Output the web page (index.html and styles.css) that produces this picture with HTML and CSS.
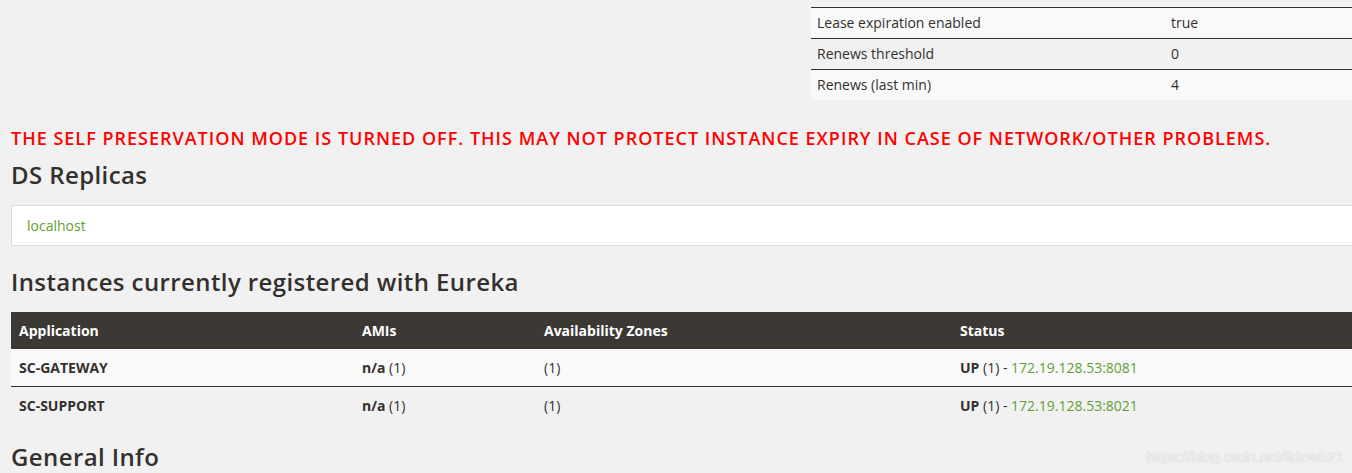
FILE: index.html
```html
<!DOCTYPE html>
<html lang="en">
<head>
    <meta charset="UTF-8">
    <title>Eureka</title>
    <link rel="stylesheet" href="styles.css">
</head>
<body>
    <div class="container">
        <div class="top-row">
            <table class="stats">
                <tr><td>Lease expiration enabled</td><td>true</td></tr>
                <tr><td>Renews threshold</td><td>0</td></tr>
                <tr><td>Renews (last min)</td><td>4</td></tr>
            </table>
        </div>

        <h4 class="warning">THE SELF PRESERVATION MODE IS TURNED OFF. THIS MAY NOT PROTECT INSTANCE EXPIRY IN CASE OF NETWORK/OTHER PROBLEMS.</h4>

        <h1>DS Replicas</h1>
        <ul class="list-group">
            <li><a href="#">localhost</a></li>
        </ul>

        <h1>Instances currently registered with Eureka</h1>
        <table class="instances">
            <thead>
                <tr>
                    <th class="col-app">Application</th>
                    <th class="col-ami">AMIs</th>
                    <th class="col-zone">Availability Zones</th>
                    <th>Status</th>
                </tr>
            </thead>
            <tbody>
                <tr>
                    <td><b>SC-GATEWAY</b></td>
                    <td><b>n/a</b> (1)</td>
                    <td>(1)</td>
                    <td><b>UP</b> (1) - <a href="#">172.19.128.53:8081</a></td>
                </tr>
                <tr>
                    <td><b>SC-SUPPORT</b></td>
                    <td><b>n/a</b> (1)</td>
                    <td>(1)</td>
                    <td><b>UP</b> (1) - <a href="#">172.19.128.53:8021</a></td>
                </tr>
            </tbody>
        </table>

        <h1 class="general">General Info</h1>
    </div>
    <div class="watermark">https://blog.csdn.net/lidew521</div>
</body>
</html>
```

FILE: styles.css
```css
body {
    margin: 0;
    background-color: #f1f1f1;
    color: #34302d;
    font-family: "Open Sans", Arial, sans-serif;
    font-size: 14px;
    overflow: hidden;
}
a {
    color: #5fa134;
    text-decoration: none;
}
.container {
    padding-left: 11px;
}
.top-row {
    display: flex;
    justify-content: flex-end;
    padding-top: 7px;
}
.stats {
    width: 541px;
    border-collapse: collapse;
    border-top: 1px solid #34302d;
}
.stats td {
    height: 29px;
    padding: 0 6px 1px;
    border-bottom: 1px solid #34302d;
}
.stats tr:nth-child(odd) {
    background-color: #f9f9f9;
}
.stats tr:last-child td {
    border-bottom: none;
}
.stats td:first-child {
    width: 342px;
}
.warning {
    margin: 26px 0 0;
    color: #ff0000;
    font-family: "Open Sans", Arial, sans-serif;
    font-weight: 600;
    font-size: 18px;
    letter-spacing: 1px;
    line-height: 24px;
}
h1 {
    margin: 9px 0 0;
    font-family: "Open Sans", Arial, sans-serif;
    font-weight: 600;
    font-size: 24px;
    letter-spacing: 0.4px;
    line-height: 32px;
}
.list-group {
    list-style: none;
    margin: 14px 0 20px;
    padding: 0;
}
.list-group li {
    background-color: #fff;
    border: 1px solid #dddddd;
    border-right: none;
    padding: 0 15px;
    height: 39px;
    line-height: 39px;
}
.list-group + h1 {
    margin-top: 20px;
}
.instances {
    width: 100%;
    border-collapse: collapse;
    margin-top: 14px;
}
.instances th {
    background-color: #3c3834;
    color: #fff;
    text-align: left;
    font-weight: 700;
    height: 37px;
    padding: 0 8px;
}
.instances td {
    height: 37px;
    padding: 0 8px;
}
.instances tbody tr:first-child {
    background-color: #f9f9f9;
}
.instances tbody tr:first-child td {
    border-bottom: 1px solid #34302d;
}
.col-app {
    width: 327px;
}
.col-ami {
    width: 166px;
}
.col-zone {
    width: 400px;
}
.general {
    margin-top: 17px;
}
.watermark {
    position: absolute;
    right: 8px;
    bottom: 8px;
    color: rgba(255, 255, 255, 0.85);
    font-family: Arial, sans-serif;
    font-size: 15px;
    text-shadow: 0 0 1px #aaa;
}
```
